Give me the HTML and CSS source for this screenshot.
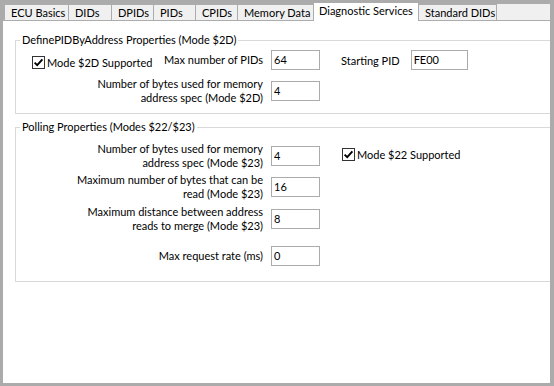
FILE: index.html
```html
<!DOCTYPE html>
<html>
<head>
<meta charset="utf-8">
<link rel="stylesheet" href="styles.css">
</head>
<body>
<div class="window">
  <div class="tabs">
    <div class="tab first w65">ECU Basics</div>
    <div class="tab w44">DIDs</div>
    <div class="tab w43">DPIDs</div>
    <div class="tab w43">PIDs</div>
    <div class="tab w43">CPIDs</div>
    <div class="tab w77">Memory Data</div>
    <div class="tab selected w106">Diagnostic Services</div>
    <div class="tab w79">Standard DIDs</div>
    <div class="tab-fill"></div>
  </div>
  <div class="panel">
    <fieldset class="group g1">
      <legend>DefinePIDByAddress Properties (Mode $2D)</legend>
      <div class="row one first-row">
        <div class="lbl split">
          <span class="check low"><span class="box"><svg width="11" height="11" viewBox="0 0 11 11"><path d="M1.6 5.6 L4.2 8.2 L9.4 2.4" fill="none" stroke="#000" stroke-width="1.9"/></svg></span>Mode $2D Supported</span>
          <span>Max number of PIDs</span>
        </div>
        <div class="input">64</div>
        <span class="lbl2">Starting PID</span>
        <div class="input wide">FE00</div>
      </div>
      <div class="row two mt7">
        <div class="lbl">Number of bytes used for memory<br>address spec (Mode $2D)</div>
        <div class="input">4</div>
      </div>
    </fieldset>
    <fieldset class="group g2">
      <legend>Polling Properties (Modes $22/$23)</legend>
      <div class="row two">
        <div class="lbl">Number of bytes used for memory<br>address spec (Mode $23)</div>
        <div class="input">4</div>
        <span class="check side"><span class="box"><svg width="11" height="11" viewBox="0 0 11 11"><path d="M1.6 5.6 L4.2 8.2 L9.4 2.4" fill="none" stroke="#000" stroke-width="1.9"/></svg></span>Mode $22 Supported</span>
      </div>
      <div class="row two mt3">
        <div class="lbl">Maximum number of bytes that can be<br>read (Mode $23)</div>
        <div class="input">16</div>
      </div>
      <div class="row two mt4">
        <div class="lbl">Maximum distance between address<br>reads to merge (Mode $23)</div>
        <div class="input">8</div>
      </div>
      <div class="row one mt13">
        <div class="lbl">Max request rate (ms)</div>
        <div class="input">0</div>
      </div>
    </fieldset>
  </div>
</div>
</body>
</html>
```

FILE: styles.css
```css
* { box-sizing: border-box; }
html, body {
  margin: 0;
  padding: 0;
  width: 554px;
  height: 386px;
  overflow: hidden;
}
body {
  background: #ababab;
  font-family: Lato, "Liberation Sans", sans-serif;
  font-size: 11px;
  color: #000;
}
.window {
  width: 554px;
  height: 386px;
  padding: 2px 4px 3px 3px;
  display: flex;
  flex-direction: column;
}
.tabs {
  display: flex;
  align-items: flex-end;
  height: 18px;
  flex: none;
}
.tab {
  height: 16px;
  border: 1px solid #acacac;
  border-bottom: 0;
  background: #f0f0f0;
  margin-left: -1px;
  padding: 0 0 0 6px;
  line-height: 15px;
  white-space: nowrap;
}
.tab.first { margin-left: 1px; }
.tab.selected {
  height: 19px;
  margin-bottom: -1px;
  background: #fff;
  position: relative;
  z-index: 1;
  padding-left: 5px;
  line-height: 16px;
}
.w65 { width: 65px; }
.w44 { width: 44px; }
.w43 { width: 43px; }
.w77 { width: 77px; }
.w106 { width: 106px; }
.w79 { width: 79px; }
.tab-fill {
  flex: 1;
  height: 16px;
  background: #f0f0f0;
  margin-left: 0;
}
.panel {
  flex: 1;
  background: #fff;
  border-top: 1px solid #acacac;
  overflow: hidden;
  display: flex;
  flex-direction: column;
}
.group {
  border: 1px solid #d9d9d9;
  border-right: 0;
  margin: 0 0 0 12px;
  padding: 0;
  min-width: 0;
}
.group legend {
  padding: 0 2px;
  margin-left: 4px;
  line-height: 14px;
}
.g1 { margin-top: 12px; padding: 3px 0 8px 0; }
.g2 { margin-top: 6px; padding: 8px 0 15px 0; }
.row {
  display: flex;
  align-items: center;
}
.row.one { height: 20px; }
.row.two { height: 28px; }
.mt3 { margin-top: 3px; }
.mt4 { margin-top: 4px; }
.mt7 { margin-top: 7px; }
.mt13 { margin-top: 13px; }
.lbl {
  width: 247px;
  text-align: right;
  line-height: 14px;
  flex: none;
}
.lbl.split {
  display: flex;
  justify-content: space-between;
  align-items: center;
  padding-left: 16px;
}
.input {
  width: 49px;
  height: 20px;
  border: 1px solid #ababab;
  margin-left: 8px;
  padding-left: 2px;
  line-height: 18px;
  flex: none;
  background: #fff;
}
.input.wide { width: 57px; margin-left: 11px; }
.lbl2 { margin-left: 21px; }
.check {
  display: flex;
  align-items: center;
  white-space: nowrap;
}
.check.low { margin-top: 5px; }
.check.side { margin-left: 22px; margin-top: -3px; }
.box {
  width: 13px;
  height: 13px;
  border: 1px solid #333;
  background: #fff;
  margin-right: 2px;
  display: flex;
}
.box svg { display: block; }
```
